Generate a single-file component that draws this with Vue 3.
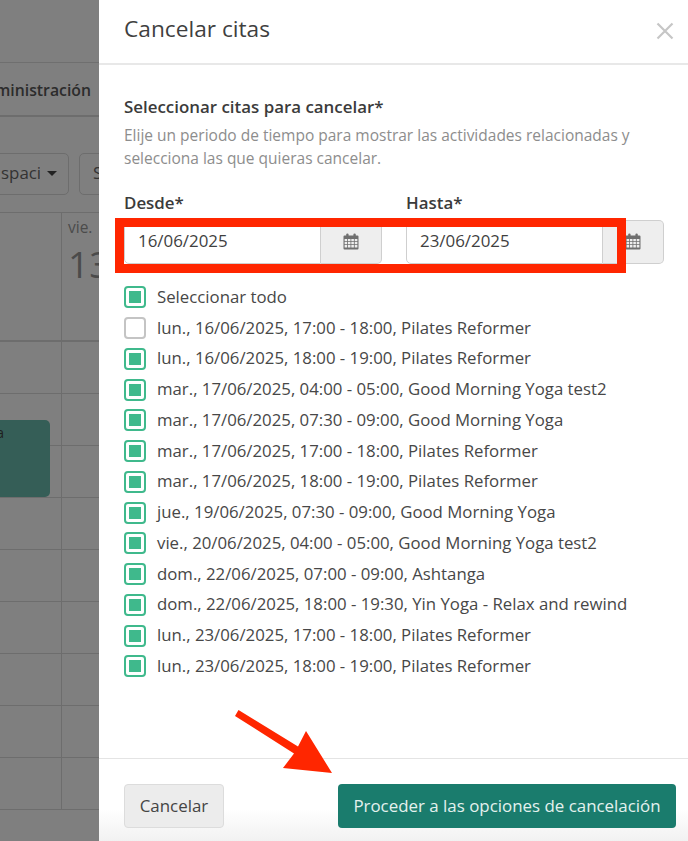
<script setup>
const rows = [
  { text: 'Seleccionar todo', on: true },
  { text: 'lun., 16/06/2025, 17:00 - 18:00, Pilates Reformer', on: false },
  { text: 'lun., 16/06/2025, 18:00 - 19:00, Pilates Reformer', on: true },
  { text: 'mar., 17/06/2025, 04:00 - 05:00, Good Morning Yoga test2', on: true },
  { text: 'mar., 17/06/2025, 07:30 - 09:00, Good Morning Yoga', on: true },
  { text: 'mar., 17/06/2025, 17:00 - 18:00, Pilates Reformer', on: true },
  { text: 'mar., 17/06/2025, 18:00 - 19:00, Pilates Reformer', on: true },
  { text: 'jue., 19/06/2025, 07:30 - 09:00, Good Morning Yoga', on: true },
  { text: 'vie., 20/06/2025, 04:00 - 05:00, Good Morning Yoga test2', on: true },
  { text: 'dom., 22/06/2025, 07:00 - 09:00, Ashtanga', on: true },
  { text: 'dom., 22/06/2025, 18:00 - 19:30, Yin Yoga - Relax and rewind', on: true },
  { text: 'lun., 23/06/2025, 17:00 - 18:00, Pilates Reformer', on: true },
  { text: 'lun., 23/06/2025, 18:00 - 19:00, Pilates Reformer', on: true },
]
const dates = [
  { label: 'Desde*', value: '16/06/2025' },
  { label: 'Hasta*', value: '23/06/2025' },
]
const gridRows = 9
</script>

<template>
  <div class="page">
    <div class="backdrop">
      <div class="top"></div>
      <div class="nav"><span>ministración</span></div>
      <div class="toolbar">
        <div class="tb-btn first"><span class="clip">spacio</span><i class="caret"></i></div>
        <div class="tb-btn second">S</div>
      </div>
      <div class="head-row">
        <div class="cell"></div>
        <div class="day"><div class="dow">vie.</div><div class="num">13</div></div>
      </div>
      <div class="grid-row" v-for="n in gridRows" :key="n">
        <div class="cell"></div>
        <div class="event" v-if="n === 2">a</div>
      </div>
    </div>

    <div class="panel">
      <header class="p-head">
        <h1>Cancelar citas</h1>
        <svg class="close" width="18" height="18" viewBox="0 0 18 18">
          <path d="M1.5 1.5 L16.5 16.5 M16.5 1.5 L1.5 16.5" stroke="#c6c6c6" stroke-width="2.2" fill="none" />
        </svg>
      </header>

      <main class="p-body">
        <div class="title">Seleccionar citas para cancelar*</div>
        <p class="desc">Elije un periodo de tiempo para mostrar las actividades relacionadas y selecciona las que quieras cancelar.</p>

        <div class="dates">
          <div class="field" v-for="d in dates" :key="d.label">
            <label>{{ d.label }}</label>
            <div class="group">
              <div class="input">{{ d.value }}</div>
              <div class="addon">
                <svg width="16" height="17" viewBox="0 0 16 17">
                  <path fill="#6f6f6f" fill-rule="evenodd" d="M1.5 2.5H3.2V1.6a1.2 1.2 0 0 1 2.4 0v.9h4.8v-.9a1.2 1.2 0 0 1 2.4 0v.9h1.7a1 1 0 0 1 1 1v12a1 1 0 0 1-1 1h-13a1 1 0 0 1-1-1v-12a1 1 0 0 1 1-1ZM1.6 6v2.2h2.5V6Zm3.3 0v2.2h2.6V6Zm3.4 0v2.2h2.6V6Zm3.4 0v2.2h2.7V6ZM1.6 9v2.2h2.5V9Zm3.3 0v2.2h2.6V9Zm3.4 0v2.2h2.6V9Zm3.4 0v2.2h2.7V9ZM1.6 12v2.6h2.5V12Zm3.3 0v2.6h2.6V12Zm3.4 0v2.6h2.6V12Zm3.4 0v2.6h2.7V12Z" />
                </svg>
              </div>
            </div>
          </div>
        </div>

        <ul class="list">
          <li v-for="r in rows" :key="r.text">
            <span class="box" :class="{ on: r.on }"></span>
            <span class="row-text">{{ r.text }}</span>
          </li>
        </ul>
      </main>

      <footer class="p-foot">
        <button class="btn plain">Cancelar</button>
        <button class="btn primary">Proceder a las opciones de cancelación</button>
      </footer>
    </div>

    <div class="red-box"></div>
    <svg class="arrow" width="110" height="70" viewBox="0 0 110 70">
      <path fill="#ff2600" d="M4.500 1 L1 7 L60 44.500 L49 59 L98 64 L72 22 L64 37.500 Z" />
    </svg>
  </div>
</template>

<style>
html, body { margin: 0; padding: 0; }
</style>

<style scoped>
* { box-sizing: border-box; }
.page {
  position: relative;
  width: 688px;
  height: 841px;
  overflow: hidden;
  display: flex;
  font-family: "Open Sans", "Noto Sans", sans-serif;
  color: #3f3f3f;
}
.backdrop {
  width: 99px;
  flex: none;
  background: #7f7f7f;
  overflow: hidden;
  position: relative;
}
.top { height: 63px; border-bottom: 1px solid #6f6f6f; }
.nav {
  height: 54px;
  border-bottom: 2px solid #6d6d6d;
  display: flex;
  justify-content: flex-end;
  align-items: center;
  padding: 2px 8px 0 0;
  font-size: 15.800px;
  font-weight: 600;
  color: #2c2c2c;
  white-space: nowrap;
}
.toolbar {
  height: 95px;
  display: flex;
  align-items: flex-start;
  gap: 10px;
  padding-top: 36px;
  margin-left: -30px;
  width: 140px;
}
.tb-btn {
  height: 42px;
  flex: none;
  border: 1px solid #6d6d6d;
  border-radius: 5px;
  display: flex;
  align-items: center;
  font-size: 16.900px;
  color: #333;
  background: #7f7f7f;
}
.first { width: 99px; padding: 0 0 0 30px; gap: 8px; }
.clip { width: 39px; overflow: hidden; white-space: nowrap; flex: none; margin-top: -3px; }
.caret {
  width: 0; height: 0; flex: none; margin: -1px 0 0 -1px;
  border-left: 5.500px solid transparent;
  border-right: 5.500px solid transparent;
  border-top: 5.500px solid #222;
}
.second { width: 60px; padding: 0 0 3px 13px; }
.head-row {
  height: 130px;
  border-top: 1px solid #6d6d6d;
  border-bottom: 2px solid #6d6d6d;
  display: flex;
}
.cell { width: 62px; flex: none; border-right: 1px solid #6d6d6d; }
.day { padding: 4px 0 0 6px; color: #4b4b4b; white-space: nowrap; }
.dow { font-size: 15.500px; line-height: 20px; }
.num { font-size: 37px; line-height: 44px; margin-top: 5px; }
.grid-row {
  height: 52px;
  border-bottom: 1px solid #6d6d6d;
  display: flex;
  position: relative;
}
.event {
  position: absolute;
  left: -10px;
  top: 26px;
  width: 60px;
  height: 77px;
  background: #355e57;
  border-radius: 5px;
  text-align: right;
  padding: 2px 46px 0 0;
  font-size: 14px;
  line-height: 22px;
  color: #1f1f1f;
  z-index: 1;
}

.panel {
  flex: 1;
  height: 841px;
  display: flex;
  flex-direction: column;
  background: #fff;
}
.p-head {
  height: 65px;
  flex: none;
  border-bottom: 2px solid #e8e8e8;
  display: flex;
  align-items: center;
  justify-content: space-between;
  padding: 0 14px 6px 25px;
}
h1 {
  margin: 0;
  font-size: 22.700px;
  font-weight: 400;
  color: #3f3f3f;
}
.close { margin-top: 5px; }
.p-body {
  flex: 1;
  padding: 30px 24px 0 25px;
}
.title { font-size: 16.900px; font-weight: 600; line-height: 23px; color: #3b3b3b; }
.desc {
  margin: 6px 0 0;
  font-size: 15.500px;
  line-height: 23px;
  color: #8d8d8d;
}
.dates { display: flex; gap: 24px; margin-top: 21px; }
.field { width: 258px; }
label { display: block; font-size: 16.900px; font-weight: 600; line-height: 23px; color: #3b3b3b; margin-bottom: 6px; }
.group { display: flex; height: 44px; }
.input {
  flex: 1;
  border: 1px solid #cfcfcf;
  border-radius: 5px 0 0 5px;
  padding: 0 0 4px 13px;
  display: flex;
  align-items: center;
  font-size: 16.900px;
  color: #3f3f3f;
}
.addon {
  width: 61px;
  flex: none;
  background: #eeeeee;
  border: 1px solid #cfcfcf;
  border-left: none;
  border-radius: 0 5px 5px 0;
  display: flex;
  align-items: center;
  justify-content: center;
  padding-bottom: 2px;
}
.list { list-style: none; margin: 18px 0 0; padding: 0; }
.list li {
  height: 30.750px;
  display: flex;
  align-items: center;
  gap: 11px;
  font-size: 16.800px;
  color: #474747;
  white-space: nowrap;
}
.row-text { margin-top: -2px; }
.box {
  width: 22px;
  height: 22px;
  flex: none;
  border: 2px solid #c4c4c4;
  border-radius: 4px;
  background: #fff;
}
.box.on {
  border-color: #3fb98c;
  padding: 3px;
  background: #3fb98c content-box;
}
.p-foot {
  height: 83px;
  flex: none;
  border-top: 1px solid #e4e4e4;
  padding: 25px 12px 0 25px;
  display: flex;
  justify-content: space-between;
  align-items: flex-start;
  background: linear-gradient(#fff 0, #fff 50px, #f1f1f1 83px);
}
.btn {
  height: 44px;
  border-radius: 4px;
  font-family: inherit;
  font-size: 16.900px;
  padding: 0 0 2px;
}
.plain {
  width: 100px;
  background: #ececec;
  border: 1px solid #dcdcdc;
  color: #444;
}
.primary {
  width: 338px;
  background: #1a7c6d;
  border: none;
  color: #e4f1ee;
}
.red-box {
  position: absolute;
  left: 115px;
  top: 218px;
  width: 511px;
  height: 55px;
  border: 9px solid #ff2600;
}
.arrow {
  position: absolute;
  left: 234px;
  top: 709px;
}
</style>
